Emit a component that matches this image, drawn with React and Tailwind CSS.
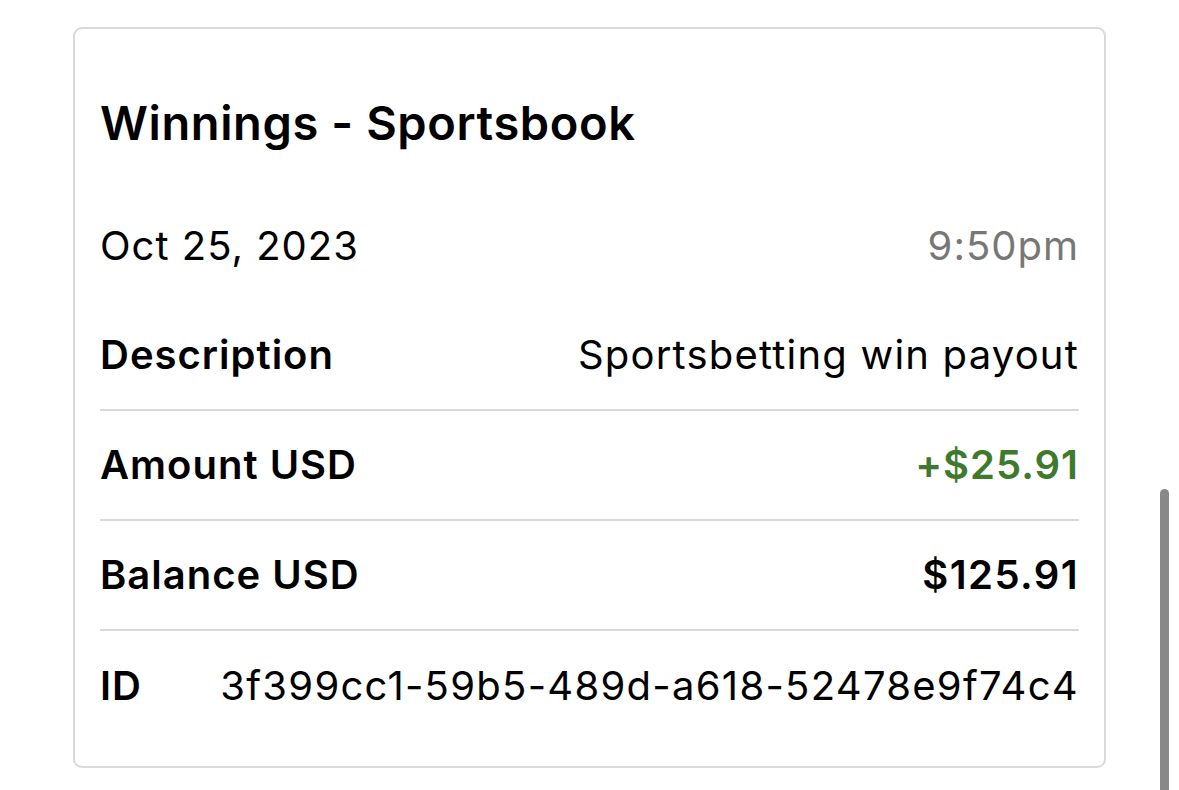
import React from "react";

function Row({ label, value, valueClass = "", last = false }) {
  return (
    <div className={"flex items-center justify-between h-[110px] " + (last ? "" : "border-b-2 border-[#d9d9d9]")}>
      <span className="font-semibold text-black whitespace-nowrap">{label}</span>
      <span className={"whitespace-nowrap " + valueClass}>{value}</span>
    </div>
  );
}

export default function App() {
  return (
    <div
      className="relative w-[1179px] h-[790px] bg-white overflow-hidden"
      style={{ fontFamily: "Inter, 'Noto Sans', sans-serif" }}
    >
      <div className="mt-[27px] ml-[73px] w-[1033px] h-[741px] border-2 border-[#d9d9d9] rounded-[9px] pl-[25px] pr-[25px] text-[40px] tracking-[1px] text-black">
        <div className="pt-[70px] pb-[43px] leading-[48px] text-[47px] font-semibold tracking-[0.6px]">
          Winnings - Sportsbook
        </div>
        <div className="flex items-center justify-between h-[111px]">
          <span>Oct 25, 2023</span>
          <span className="text-[#777777]">9:50pm</span>
        </div>
        <Row label="Description" value="Sportsbetting win payout" valueClass="tracking-[1.2px]" />
        <Row label="Amount USD" value="+$25.91" valueClass="font-semibold text-[#3e7a2c]" />
        <Row label="Balance USD" value="$125.91" valueClass="font-semibold tracking-[1.4px]" />
        <Row label="ID" value="3f399cc1-59b5-489d-a618-52478e9f74c4" valueClass="tracking-[1.28px]" last />
      </div>
      <div className="absolute left-[1160px] top-[489px] w-[9px] h-[320px] rounded-full bg-[#888888]" />
    </div>
  );
}
